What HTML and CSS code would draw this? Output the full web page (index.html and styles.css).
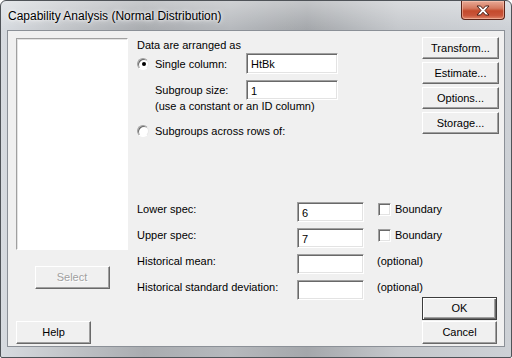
FILE: index.html
```
<!DOCTYPE html>
<html>
<head>
<meta charset="utf-8">
<link rel="stylesheet" href="styles.css">
</head>
<body>
<div class="window">
  <div class="titlebar">
    <div class="title">Capability Analysis (Normal Distribution)</div>
    <div class="close">
      <svg width="16" height="11" viewBox="0 0 16 11">
        <path d="M2 1 L5.5 1 L8 3.8 L10.5 1 L14 1 L10 5.5 L14 10 L10.5 10 L8 7.2 L5.5 10 L2 10 L6 5.5 Z" fill="#fff" stroke="#4a2018" stroke-width="1" stroke-linejoin="round"/>
      </svg>
    </div>
  </div>
  <div class="client">
    <div class="col-left">
      <div class="listbox"></div>
      <div class="btn btn-select disabled">Select</div>
      <div class="btn btn-help">Help</div>
    </div>
    <div class="col-mid">
      <div class="caption">Data are arranged as</div>
      <div class="row row-single">
        <span class="radio checked"><span class="dot"></span></span>
        <span class="lbl lbl-opt">Single column:</span>
        <div class="field field-wide">HtBk</div>
      </div>
      <div class="row row-sub">
        <span class="lbl lbl-opt">Subgroup size:</span>
        <div class="field field-wide field-short">1</div>
      </div>
      <div class="note">(use a constant or an ID column)</div>
      <div class="row row-across">
        <span class="radio"></span>
        <span class="lbl">Subgroups across rows of:</span>
      </div>
      <div class="specs">
        <div class="spec">
          <span class="spec-lbl">Lower spec:</span>
          <div class="field field-spec">6</div>
          <span class="check"></span><span class="spec-after">Boundary</span>
        </div>
        <div class="spec">
          <span class="spec-lbl">Upper spec:</span>
          <div class="field field-spec">7</div>
          <span class="check"></span><span class="spec-after">Boundary</span>
        </div>
        <div class="spec">
          <span class="spec-lbl">Historical mean:</span>
          <div class="field field-spec"></div>
          <span class="spec-after opt">(optional)</span>
        </div>
        <div class="spec">
          <span class="spec-lbl">Historical standard deviation:</span>
          <div class="field field-spec"></div>
          <span class="spec-after opt">(optional)</span>
        </div>
      </div>
    </div>
    <div class="col-right">
      <div class="btn btn-side">Transform...</div>
      <div class="btn btn-side">Estimate...</div>
      <div class="btn btn-side">Options...</div>
      <div class="btn btn-side">Storage...</div>
      <div class="bottom-btns">
        <div class="btn btn-ok">OK</div>
        <div class="btn btn-cancel">Cancel</div>
      </div>
    </div>
  </div>
</div>
</body>
</html>
```
FILE: styles.css
```
html, body {
  margin: 0;
  padding: 0;
  background: #ffffff;
}
.window {
  width: 512px;
  height: 358px;
  box-sizing: border-box;
  border: 1px solid #4f5358;
  border-radius: 6px 6px 2px 2px;
  background:
    linear-gradient(180deg, rgba(255,255,255,0.35) 0px, rgba(255,255,255,0) 28px),
    linear-gradient(90deg, #d7dbe0 0%, #c3c6ca 12%, #a9acb0 28%, #b6b9bd 45%, #a4a7ab 60%, #c5c8cc 78%, #cdd1d6 100%);
  display: flex;
  flex-direction: column;
  font-family: "Liberation Sans", Arial, sans-serif;
  overflow: hidden;
}
.titlebar {
  height: 29px;
  display: flex;
  align-items: flex-start;
}
.title {
  font-family: "Liberation Sans", Arial, sans-serif;
  font-size: 12px;
  color: #000;
  padding-left: 7px;
  padding-top: 8px;
  text-shadow: 0 0 6px #fff, 0 0 3px #fff;
}
.close {
  margin-left: auto;
  margin-right: 6px;
  width: 44px;
  height: 19px;
  box-sizing: border-box;
  border: 1px solid #5c2418;
  border-top: none;
  border-radius: 0 0 4px 4px;
  background: linear-gradient(180deg, #e9a996 0%, #d57a60 40%, #c44a2c 55%, #c9553a 80%, #e0866a 100%);
  display: flex;
  align-items: center;
  justify-content: center;
  box-shadow: inset 0 0 0 1px rgba(255,210,190,0.5);
}
.client {
  margin-left: 6px;
  width: 498px;
  height: 317px;
  box-sizing: border-box;
  background: #f0f0f0;
  border: 1px solid #8b9097;
  display: flex;
  font-size: 11px;
  color: #000;
}
.col-left {
  flex: none;
  width: 112px;
  margin-left: 8px;
  padding-top: 7px;
  padding-bottom: 2px;
  display: flex;
  flex-direction: column;
}
.listbox {
  height: 212px;
  box-sizing: border-box;
  background: #fff;
  border-top: 1px solid #a0a0a0;
  border-left: 1px solid #a0a0a0;
  border-right: 1px solid #fff;
  border-bottom: 1px solid #fff;
  box-shadow: inset 1px 1px 0 #e3e3e3;
}
.btn {
  width: 75px;
  height: 23px;
  box-sizing: border-box;
  background: #f0f0f0;
  border-top: 1px solid #fff;
  border-left: 1px solid #fff;
  border-right: 1px solid #696969;
  border-bottom: 1px solid #696969;
  box-shadow: inset -1px -1px 0 #a0a0a0;
  display: flex;
  align-items: center;
  justify-content: center;
  font-size: 11px;
  color: #000;
  padding-bottom: 1px;
}
.btn-select {
  margin-top: 16px;
  align-self: center;
}
.disabled {
  color: #a0a0a0;
  text-shadow: 1px 1px 0 #fff;
}
.btn-help {
  margin-top: auto;
}
.col-mid {
  flex: 1;
  min-width: 0;
  margin-left: 9px;
  display: flex;
  flex-direction: column;
}
.caption {
  margin-top: 8px;
  line-height: 13px;
  height: 13px;
}
.row {
  display: flex;
  align-items: center;
}
.row-single {
  margin-top: 1px;
}
.row-sub {
  margin-top: 6px;
  padding-left: 18px;
}
.row-across {
  margin-top: 11px;
  height: 13px;
}
.note {
  padding-left: 18px;
  line-height: 13px;
  height: 13px;
}
.radio {
  flex: none;
  width: 12px;
  height: 12px;
  box-sizing: border-box;
  border-radius: 50%;
  background: #fff;
  border: 1px solid;
  border-color: #a0a0a0 #e8e8e8 #fff #a0a0a0;
  box-shadow: inset 1px 1px 0 #696969;
  margin-right: 6px;
  display: flex;
  align-items: center;
  justify-content: center;
}
.dot {
  width: 4px;
  height: 4px;
  border-radius: 50%;
  background: #000;
  margin: 1px 0 0 1px;
}
.lbl-opt {
  flex: none;
  width: 91px;
}
.field {
  flex: none;
  box-sizing: border-box;
  background: #fff;
  border-top: 1px solid #a0a0a0;
  border-left: 1px solid #a0a0a0;
  border-right: 1px solid #fff;
  border-bottom: 1px solid #fff;
  box-shadow: inset 1px 1px 0 #696969, inset -1px -1px 0 #e3e3e3;
  padding-left: 4px;
  display: flex;
  align-items: center;
  font-size: 11px;
  padding-top: 1px;
}
.field-wide {
  width: 92px;
  height: 21px;
}
.field-short {
  height: 20px;
}
.specs {
  margin-top: 65px;
  display: flex;
  flex-direction: column;
  gap: 6px;
}
.spec {
  display: flex;
  align-items: flex-start;
  height: 20px;
}
.spec-lbl {
  flex: none;
  width: 160px;
  line-height: 15px;
  white-space: nowrap;
}
.field-spec {
  width: 67px;
  height: 20px;
}
.check {
  flex: none;
  width: 13px;
  height: 13px;
  box-sizing: border-box;
  margin-left: 14px;
  margin-top: 1px;
  background: #fff;
  border-top: 1px solid #a0a0a0;
  border-left: 1px solid #a0a0a0;
  border-right: 1px solid #fff;
  border-bottom: 1px solid #fff;
  box-shadow: inset 1px 1px 0 #696969, inset -1px -1px 0 #e3e3e3;
}
.spec-after {
  margin-left: 4px;
  line-height: 15px;
  white-space: nowrap;
}
.spec-after.opt {
  margin-left: 13px;
}
.col-right {
  flex: none;
  width: 77px;
  margin-left: auto;
  margin-right: 5px;
  padding-top: 6px;
  padding-bottom: 2px;
  display: flex;
  flex-direction: column;
  gap: 3px;
}
.btn-side {
  width: 77px;
  height: 22px;
}
.bottom-btns {
  margin-top: auto;
  display: flex;
  flex-direction: column;
  gap: 1px;
}
.btn-ok {
  border: 1px solid #3c3c3c;
  box-shadow: inset 1px 1px 0 #fff, inset -1px -1px 0 #696969, inset -2px -2px 0 #a0a0a0;
}
```
